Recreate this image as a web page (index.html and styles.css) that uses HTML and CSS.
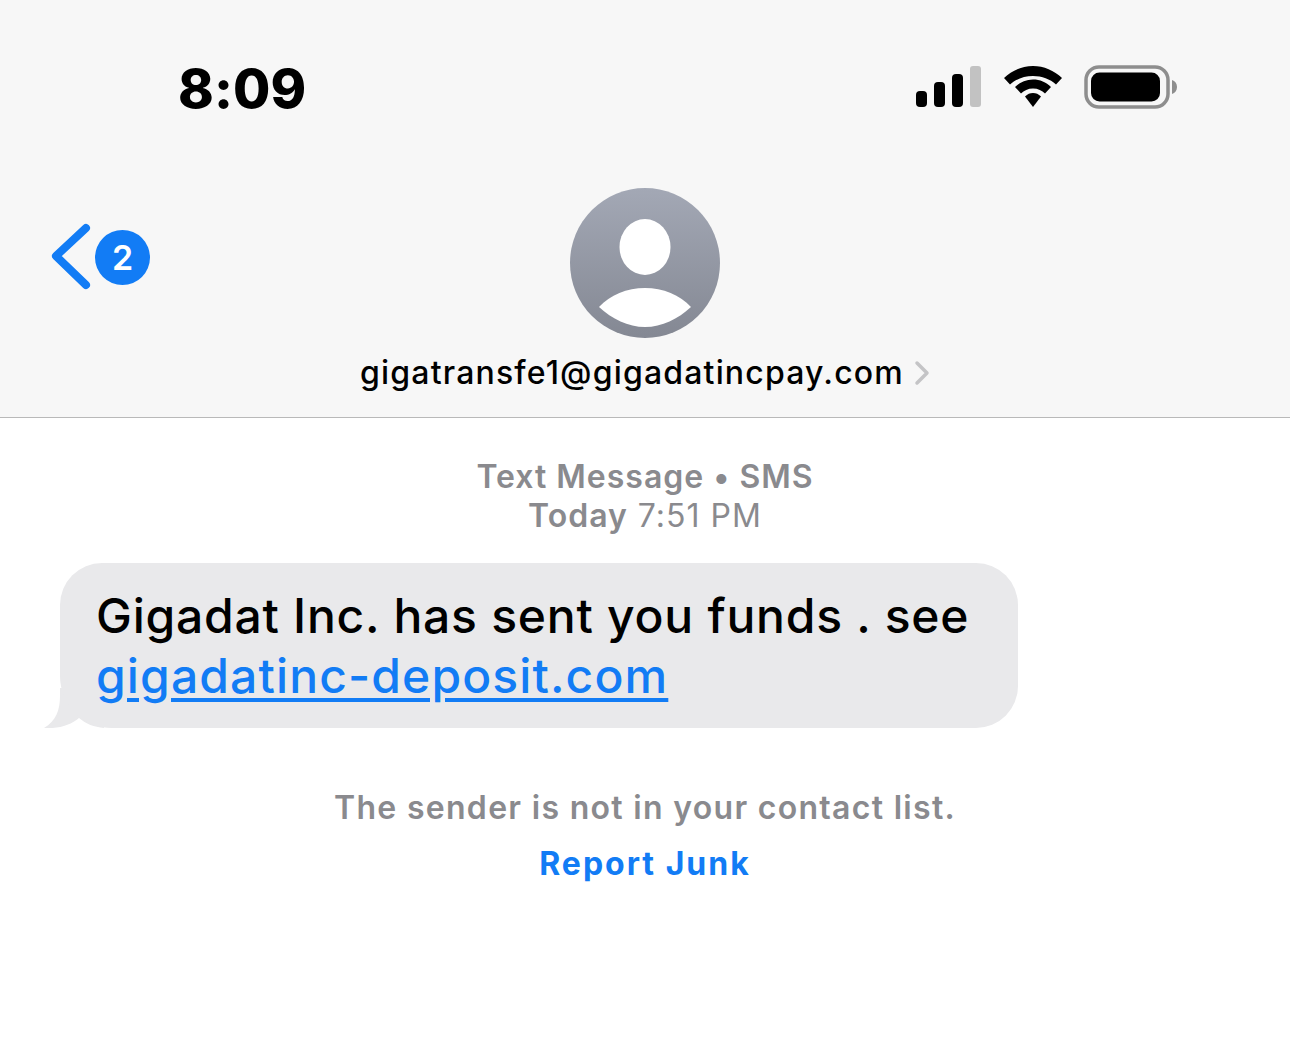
FILE: index.html
```html
<!DOCTYPE html>
<html lang="en">
<head>
  <meta charset="UTF-8" />
  <meta name="viewport" content="width=device-width, initial-scale=1.0"/>
  <title>Messages</title>
  <link rel="stylesheet" href="styles.css">
</head>
<body>
  <header class="top">
    <div class="status">
      <div class="time">8:09</div>
      <div class="status-icons">
        <svg class="signal" width="66" height="42" viewBox="0 0 66 42">
          <rect x="0" y="25" width="11" height="16" rx="4" fill="#000"/>
          <rect x="18" y="16" width="11" height="25" rx="4" fill="#000"/>
          <rect x="36" y="8" width="11" height="33" rx="4" fill="#000"/>
          <rect x="54" y="0" width="11" height="41" rx="3" fill="#c2c2c2"/>
        </svg>
        <svg class="wifi" width="58" height="42" viewBox="0 0 58 42">
          <path d="M29 0C18 0 8 4.500 0 12L6 18.500C12 13 20 10 29 10S46 13 52 18.500L58 12C50 4.500 40 0 29 0Z" fill="#000"/>
          <path d="M29 13.500C22 13.500 16 16 11 21L17 27.500C20 24.500 24 22.500 29 22.500S38 24.500 41 27.500L47 21C42 16 36 13.500 29 13.500Z" fill="#000"/>
          <path d="M29 27C26 27 23.500 28 21 30.500L29 41L37 30.500C34.500 28 32 27 29 27Z" fill="#000"/>
        </svg>
        <svg class="battery" width="94" height="44" viewBox="0 0 94 44">
          <rect x="2" y="2" width="82" height="40" rx="13" fill="none" stroke="#8e8e8e" stroke-width="3.500"/>
          <rect x="7" y="7.500" width="69" height="29" rx="8.500" fill="#000"/>
          <path d="M88 15C91 16 93 18.500 93 22S91 28 88 29Z" fill="#8e8e8e"/>
        </svg>
      </div>
    </div>
    <div class="nav">
      <div class="back">
        <svg width="42" height="68" viewBox="0 0 42 68">
          <path d="M37 5L7 33L37 62" fill="none" stroke="#127cf5" stroke-width="8" stroke-linecap="round" stroke-linejoin="round"/>
        </svg>
        <span class="badge">2</span>
      </div>
      <div class="contact">
        <div class="avatar">
          <svg width="150" height="150" viewBox="0 0 150 150">
            <ellipse cx="75" cy="59" rx="25.500" ry="28" fill="#fff"/>
            <path d="M29 119C40 107 57 100 75 100S110 107 121 119C108 131 92 139 75 139S42 131 29 119Z" fill="#fff"/>
          </svg>
        </div>
        <div class="address">
          <span>gigatransfe1@gigadatincpay.com</span>
          <svg width="16" height="26" viewBox="0 0 16 26">
            <path d="M3 3L13 13L3 23" fill="none" stroke="#c4c4c6" stroke-width="3.500" stroke-linecap="round" stroke-linejoin="round"/>
          </svg>
        </div>
      </div>
      <div></div>
    </div>
  </header>

  <main class="thread">
    <div class="meta">
      <div><b>Text Message • SMS</b></div>
      <div><b>Today</b> 7:51 PM</div>
    </div>
    <div class="bubble-row">
      <svg class="tail" width="60" height="40" viewBox="0 0 60 40">
        <path d="M16 0V8C16 22 12 33 0 40C14 41 27 37 35 30C42 36 50 39 60 40V0Z" fill="#e9e9eb"/>
      </svg>
      <div class="bubble">
        Gigadat Inc. has sent you funds . see
        <a href="#">gigadatinc-deposit.com</a>
      </div>
    </div>
    <p class="notice">The sender is not in your contact list.</p>
    <a class="report" href="#">Report Junk</a>
  </main>
</body>
</html>
```

FILE: styles.css
```css
body {
  margin: 0;
  font-family: Inter, "Liberation Sans", sans-serif;
  background: #fff;
  color: #000;
}

.top {
  height: 417px;
  background: #f7f7f7;
  border-bottom: 1px solid #b9b9b9;
}

.status {
  display: flex;
  justify-content: space-between;
  align-items: center;
  height: 60px;
  padding: 57px 112px 0 178px;
}

.time {
  padding-top: 3px;
  font-size: 54px;
  font-weight: 800;
  letter-spacing: 0.1px;
  line-height: 60px;
}

.status-icons {
  display: flex;
  align-items: center;
  gap: 22px;
}

.nav {
  display: grid;
  grid-template-columns: 1fr auto 1fr;
  margin-top: 71px;
}

.back {
  display: flex;
  align-items: center;
  align-self: start;
  margin: 35px 0 0 49px;
}

.badge {
  width: 55px;
  height: 55px;
  margin-left: 4px;
  border-radius: 50%;
  background: #127cf5;
  color: #fff;
  font-size: 34px;
  font-weight: 600;
  line-height: 55px;
  text-align: center;
}

.contact {
  display: flex;
  flex-direction: column;
  align-items: center;
}

.avatar {
  width: 150px;
  height: 150px;
  border-radius: 50%;
  background: linear-gradient(#a3a8b5, #848893);
}

.avatar svg {
  display: block;
}

.address {
  display: flex;
  align-items: center;
  gap: 10px;
  margin-top: 15px;
  font-size: 32px;
  font-weight: 500;
  letter-spacing: 1.17px;
  line-height: 40px;
  white-space: nowrap;
}

.thread {
  display: flex;
  flex-direction: column;
  align-items: center;
}

.meta {
  margin-top: 39px;
  color: #8a8a8e;
  font-size: 32px;
  letter-spacing: 1px;
  line-height: 39px;
  text-align: center;
}

.meta b {
  font-weight: 600;
}

.bubble-row {
  position: relative;
  align-self: flex-start;
  margin: 28px 0 0 60px;
}

.tail {
  position: absolute;
  left: -16px;
  bottom: 0;
}

.bubble {
  position: relative;
  box-sizing: border-box;
  width: 958px;
  height: 165px;
  padding: 23px 36px;
  border-radius: 42px 42px 42px 52px;
  background: #e9e9eb;
  font-size: 48px;
  font-weight: 500;
  letter-spacing: 0.76px;
  line-height: 60px;
}

.bubble a {
  display: block;
  color: #127cf5;
  letter-spacing: 1.12px;
  text-underline-offset: 5px;
}

.notice {
  margin: 61px 0 0;
  color: #8a8a8e;
  font-size: 32px;
  font-weight: 600;
  letter-spacing: 1.3px;
  line-height: 38px;
}

.report {
  margin-top: 18px;
  color: #127cf5;
  font-size: 32px;
  font-weight: 700;
  letter-spacing: 2px;
  line-height: 38px;
  text-decoration: none;
}
```
